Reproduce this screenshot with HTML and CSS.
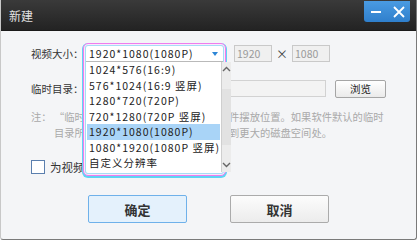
FILE: index.html
```html
<!DOCTYPE html>
<html>
<head>
    <meta charset="UTF-8" />
    <title>新建</title>
    <link rel="stylesheet" href="styles.css">
</head>
<body>
    <div class="window">
        <div class="titlebar">
            <span class="title">新建</span>
            <div class="win-buttons">
                <span class="win-btn min"><span class="bar"></span></span>
                <span class="win-btn close">
                    <svg width="12" height="12" viewBox="0 0 12 12"><path d="M1 1 L11 11 M11 1 L1 11" stroke="#fff" stroke-width="1.8" fill="none"/></svg>
                </span>
            </div>
        </div>

        <div class="content">
            <div class="row row-size">
                <span class="label">视频大小：</span>
                <div class="combo-slot">
                    <div class="combo">
                        <div class="combo-field">
                            <span>1920*1080(1080P)</span>
                            <span class="caret"></span>
                        </div>
                        <div class="combo-body">
                            <ul class="combo-list">
                                <li>1024*576(16:9)</li>
                                <li>576*1024(16:9 竖屏)</li>
                                <li>1280*720(720P)</li>
                                <li>720*1280(720P 竖屏)</li>
                                <li class="selected">1920*1080(1080P)</li>
                                <li>1080*1920(1080P 竖屏)</li>
                                <li>自定义分辨率</li>
                            </ul>
                            <div class="scrollbar">
                                <svg class="arrow" width="9" height="6" viewBox="0 0 9 6"><path d="M1 5 L4.5 1.5 L8 5" stroke="#666" stroke-width="1.4" fill="none"/></svg>
                                <div class="track"><div class="thumb"></div></div>
                                <svg class="arrow" width="9" height="6" viewBox="0 0 9 6"><path d="M1 1 L4.5 4.5 L8 1" stroke="#666" stroke-width="1.4" fill="none"/></svg>
                            </div>
                        </div>
                    </div>
                </div>
                <span class="num-box">1920</span>
                <span class="times">×</span>
                <span class="num-box">1080</span>
            </div>

            <div class="row row-dir">
                <span class="label">临时目录：</span>
                <span class="path-box"></span>
                <button class="btn-small">浏览</button>
            </div>

            <div class="note">
                <span class="note-label">注：</span>
                <p class="note-text">“临时目录”是录制过程中视频临时文件摆放位置。如果软件默认的临时目录所在磁盘的剩余空间不足，请设定到更大的磁盘空间处。</p>
            </div>

            <label class="check-row">
                <span class="checkbox"></span>
                <span>为视频自动添加片头片尾</span>
            </label>

            <div class="actions">
                <button class="btn btn-primary">确定</button>
                <button class="btn">取消</button>
            </div>
        </div>
    </div>
</body>
</html>
```

FILE: styles.css
```css
body {
    margin: 0;
    background: #ffffff;
    font-family: "Noto Sans CJK SC", "Liberation Sans", sans-serif;
    font-size: 10.5px;
    color: #333;
}

.window {
    width: 415px;
    height: 239px;
    background: #f4f5f7;
    border: 1px solid #7a7a7a;
    border-top: none;
    border-left-color: #c8c8c8;
    border-radius: 0 0 3px 3px;
    overflow: hidden;
}

.titlebar {
    height: 31px;
    background: linear-gradient(#3a3a3a, #232323);
    border-bottom: 1px solid #1a1a1a;
    box-sizing: border-box;
    display: flex;
    align-items: flex-start;
    justify-content: space-between;
}

.title {
    font-size: 12px;
    color: #e2e2e2;
    margin: 7px 0 0 8px;
}

.win-buttons {
    display: flex;
    margin: 1px 6px 0 0;
    background: linear-gradient(#4a9be2, #2f7fcc);
    border-radius: 0 0 3px 3px;
    height: 21px;
}

.win-btn {
    width: 23px;
    height: 21px;
    display: flex;
    align-items: center;
    justify-content: center;
}

.win-btn.min .bar {
    width: 10px;
    height: 2px;
    background: #fff;
}

.content {
    padding: 14px 0 0 30px;
}

.row {
    display: flex;
    align-items: center;
    height: 17px;
}

.label {
    width: 54px;
    white-space: nowrap;
    color: #333;
}

.combo-slot {
    position: relative;
    width: 134px;
    height: 17px;
    margin-right: 15px;
}

/* the open drop-down lies over the rows below */
.combo {
    position: absolute;
    top: -2px;
    left: -2px;
    width: 137px;
    height: 127px;
    border: 1px solid #ee7cee;
    border-radius: 5px;
    box-shadow: inset 0 0 0 1px #fbe9fb, inset 0 0 0 2px #a6dcf6, 0 1px 0 1px #5fd3f5;
    background: #fff;
    padding: 2px;
    box-sizing: content-box;
    z-index: 2;
}

.combo-field {
    height: 15px;
    display: flex;
    align-items: center;
    justify-content: space-between;
    padding: 0 5px 0 3px;
    color: #222;
    letter-spacing: 1px;
}

.caret {
    width: 0;
    height: 0;
    border-left: 3.5px solid transparent;
    border-right: 3.5px solid transparent;
    border-top: 4px solid #2d86d6;
}

.combo-body {
    display: flex;
    border-top: 1px solid #b9b9b9;
    height: 110px;
}

.combo-list {
    list-style: none;
    margin: 0;
    padding: 0;
    flex: 1;
    border-right: 1px solid #cfcfcf;
}

.combo-list li {
    height: 15.5px;
    line-height: 15.5px;
    padding-left: 2px;
    margin: 0 1px;
    color: #222;
    white-space: nowrap;
    letter-spacing: 1px;
}

.combo-list li.selected {
    background: #a9d4f7;
}

.scrollbar {
    width: 13px;
    background: #ececec;
    display: flex;
    flex-direction: column;
    align-items: center;
}

.scrollbar .arrow {
    margin: 4px 0;
}

.track {
    flex: 1;
    width: 100%;
    display: flex;
    flex-direction: column;
    justify-content: center;
}

.thumb {
    height: 56px;
    background: #e2e2e2;
}

.num-box {
    width: 34px;
    height: 15px;
    line-height: 15px;
    padding-left: 2px;
    background: #f0f0f0;
    border: 1px solid #c9c9c9;
    color: #9a9a9a;
}

.times {
    width: 20px;
    text-align: center;
    font-size: 12px;
    color: #444;
}

.row-dir {
    margin-top: 18px;
}

.path-box {
    width: 239px;
    height: 15px;
    background: #f3f3f3;
    border: 1px solid #d2d2d2;
}

.btn-small {
    margin-left: 9px;
    width: 51px;
    height: 18px;
    padding: 0;
    font-family: inherit;
    font-size: 10.5px;
    color: #222;
    background: linear-gradient(#ffffff, #eaeaea);
    border: 1px solid #a5a5a5;
    border-radius: 2px;
}

.note {
    display: flex;
    margin-top: 12px;
    color: #a9a9a9;
    line-height: 16px;
    font-size: 10.3px;
}

.note-label {
    width: 23px;
    flex-shrink: 0;
}

.note-text {
    margin: 0;
    width: 336px;
}

.check-row {
    display: flex;
    align-items: center;
    margin-top: 18px;
    gap: 5px;
    color: #333;
    font-size: 11.5px;
}

.checkbox {
    width: 12px;
    height: 12px;
    background: #fff;
    border: 1px solid #5b7fae;
}

.actions {
    display: flex;
    gap: 43px;
    margin: 20px 0 0 57px;
}

.btn {
    width: 99px;
    height: 28px;
    font-family: inherit;
    font-size: 13px;
    font-weight: bold;
    color: #333;
    background: linear-gradient(#fcfcfc, #ececec);
    border: 1px solid #ababab;
    border-radius: 2px;
}

.btn-primary {
    background: #e4f1fc;
    border-color: #6fb1ea;
}
```
